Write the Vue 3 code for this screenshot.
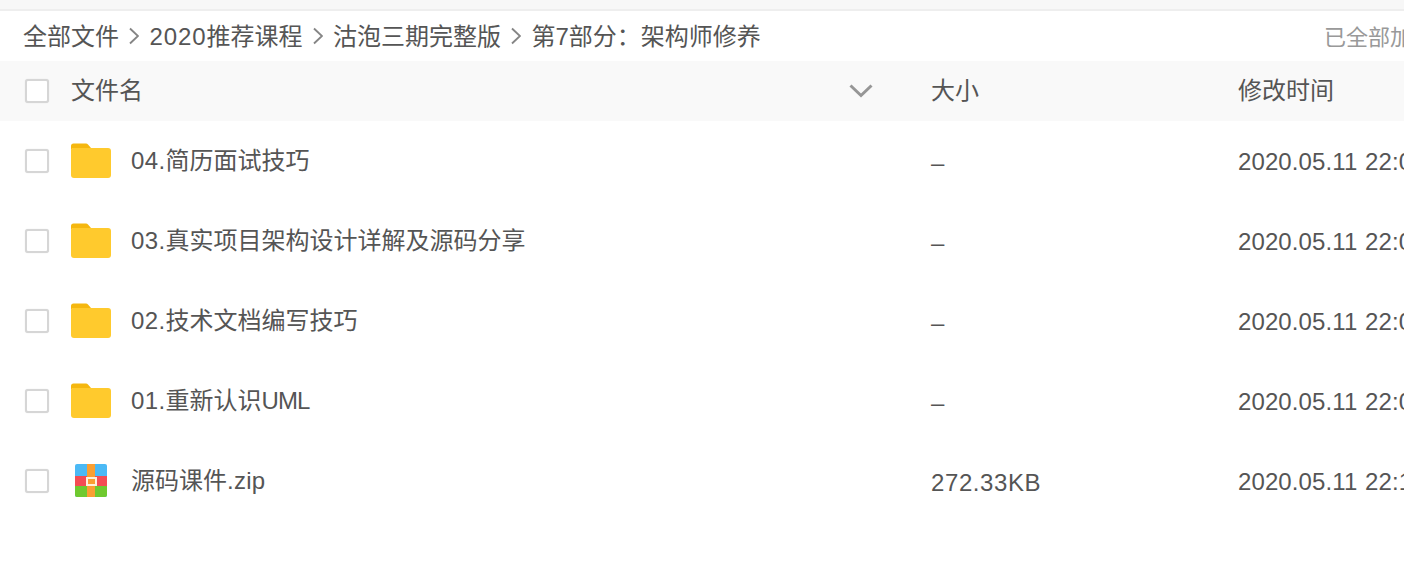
<template>
  <div class="page">
    <div class="topbar"></div>

    <div class="crumbs">
      <div class="path">
        <template v-for="(c, i) in crumbs" :key="c.name">
          <svg v-if="i > 0" class="sep" width="10" height="18" viewBox="0 0 10 18">
            <path d="M1 1.5 L9 9 L1 16.5" fill="none" stroke="#858585" stroke-width="1.9" />
          </svg>
          <span><span class="num">{{ c.pre }}</span>{{ c.name }}</span>
        </template>
      </div>
      <span class="loaded">已全部加载，共5个</span>
    </div>

    <div class="row head">
      <span class="check"></span>
      <div class="name">
        <span class="title">文件名</span>
        <svg class="sort" width="24" height="14" viewBox="0 0 24 14">
          <path d="M1.5 1.5 L12 11.5 L22.5 1.5" fill="none" stroke="#969696" stroke-width="3" />
        </svg>
      </div>
      <span class="size">大小</span>
      <span class="time">修改时间</span>
    </div>

    <div v-for="f in files" :key="f.name" class="row">
      <span class="check"></span>
      <div class="name">
        <span class="icon">
          <svg v-if="f.zip" width="34" height="34" viewBox="0 0 34 34">
            <rect x="1" y="0" width="32" height="33" rx="2" fill="#4bb9f5" />
            <rect x="1" y="12" width="32" height="10" fill="#f44c54" />
            <path d="M1 22 H33 V31 a2 2 0 0 1 -2 2 H3 a2 2 0 0 1 -2 -2 Z" fill="#6fc92f" />
            <rect x="13" y="0" width="8" height="33" fill="#fa9f33" />
            <rect x="13" y="14" width="9" height="7" fill="#fa9f33" stroke="#fff0dc" stroke-width="2" />
          </svg>
          <svg v-else width="40" height="36" viewBox="0 0 40 36">
            <path d="M0 3 a2.5 2.5 0 0 1 2.5 -2.5 H15 a3 3 0 0 1 2 1 L20 5 H2 L0 7 Z" fill="#f5b70f" />
            <path d="M0 7 a2 2 0 0 1 2 -2 H37 a3 3 0 0 1 3 3 V32 a3 3 0 0 1 -3 3 H3 a3 3 0 0 1 -3 -3 Z" fill="#ffca2d" />
          </svg>
        </span>
        <span class="label"><span class="pre">{{ f.pre }}</span>{{ f.name }}<span :class="f.zip ? 'ext' : 'caps'">{{ f.post }}</span></span>
      </div>
      <span class="size">{{ f.size }}</span>
      <span class="time">{{ f.time }}</span>
    </div>
  </div>
</template>

<script setup>
const crumbs = [
  { name: '全部文件' },
  { pre: '2020', name: '推荐课程' },
  { name: '沽泡三期完整版' },
  { name: '第7部分：架构师修养' },
]

const files = [
  { pre: '04.', name: '简历面试技巧', size: '–', time: '2020.05.11 22:03' },
  { pre: '03.', name: '真实项目架构设计详解及源码分享', size: '–', time: '2020.05.11 22:03' },
  { pre: '02.', name: '技术文档编写技巧', size: '–', time: '2020.05.11 22:03' },
  { pre: '01.', name: '重新认识', post: 'UML', size: '–', time: '2020.05.11 22:03' },
  { name: '源码课件', post: '.zip', size: '272.33KB', time: '2020.05.11 22:10', zip: true },
]
</script>

<style>
html, body {
  margin: 0;
  background: #fff;
  overflow: hidden;
}
</style>

<style scoped>
.page {
  width: 1404px;
  height: 580px;
  overflow: hidden;
  font-family: "Liberation Sans", "Noto Sans CJK SC", sans-serif;
  font-size: 24px;
  color: #555;
}

.topbar {
  height: 9px;
  background: #f7f7f7;
  border-bottom: 2px solid #eee;
}

.crumbs {
  height: 50px;
  display: flex;
  align-items: center;
  justify-content: space-between;
  padding-left: 23px;
  white-space: nowrap;
}

.path {
  display: flex;
  align-items: center;
  margin-top: -4px;
}

.sep {
  margin: 4px 10.5px 0 10px;
}

.num {
  letter-spacing: 0.9px;
}

.pre {
  letter-spacing: 0.4px;
}

.ext {
  letter-spacing: 0.25px;
}

.caps {
  letter-spacing: -0.9px;
}

.loaded {
  flex: none;
  width: 80px;
  overflow: hidden;
  margin-top: -2px;
  font-size: 22px;
  color: #999;
}

.row {
  height: 80px;
  display: flex;
  align-items: center;
  white-space: nowrap;
}

.head {
  height: 60px;
  background: #f9f9f9;
}

.check {
  flex: none;
  width: 20px;
  height: 20px;
  margin-left: 25px;
  border: 2px solid #d6d6d6;
  border-radius: 3px;
  background: #fff;
  box-shadow: 0 0 1px #d6d6d6;
}

.name {
  flex: none;
  width: 860px;
  margin-left: 22px;
  display: flex;
  align-items: center;
}

.head .name {
  justify-content: space-between;
  padding-right: 58px;
  box-sizing: border-box;
}

.title {
  margin-top: -6px;
}

.icon {
  flex: none;
  width: 40px;
  height: 36px;
  display: flex;
  align-items: center;
  justify-content: center;
  margin-right: 20px;
}

.label {
  margin-top: -5px;
}

.size {
  flex: none;
  width: 307px;
  margin-top: 3px;
  letter-spacing: 0.6px;
}

.time {
  flex: none;
  margin-top: 2px;
  letter-spacing: 0.1px;
  word-spacing: 1px;
}

.head .size,
.head .time {
  margin-top: -6px;
  letter-spacing: 0;
}
</style>
